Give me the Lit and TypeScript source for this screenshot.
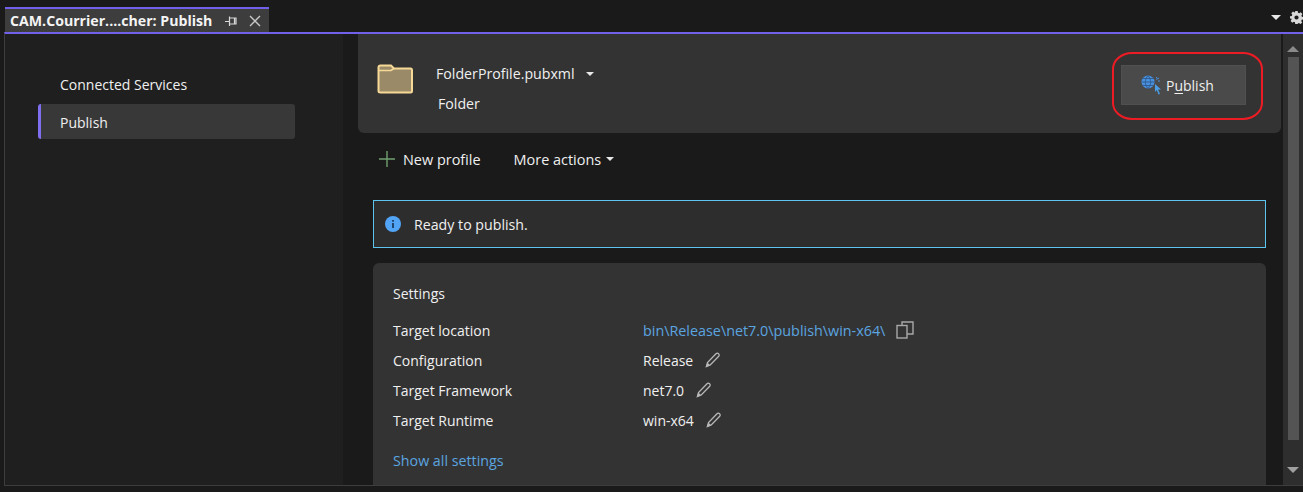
import { LitElement, html, css, svg } from "lit";
import { customElement } from "lit/decorators.js";

const pencil = svg`<svg class="pencil" width="17" height="18" viewBox="0 0 17 18" fill="none"><path d="M2.500 15.500 L3.500 11.500 L12 2.800 C12.800 2 13.800 2 14.600 2.700 C15.400 3.400 15.400 4.400 14.700 5.200 L6.200 14 Z" stroke="#b8b8b8" stroke-width="1.300"/><path d="M1.500 16.500 L3.300 11.500 L6.300 14.200 Z" fill="#b8b8b8"/></svg>`;

@customElement("app-root")
export class AppRoot extends LitElement {
  static styles = css`
    :host { display: block; width: 1303px; height: 492px; background: #1a1a1a; overflow: hidden; position: relative;
      font-family: "Open Sans", "Noto Sans", sans-serif; font-size: 14px; color: #f0f0f0; }
    .tabbar { height: 32px; display: flex; padding-left: 5px; box-sizing: border-box; }
    .tab { width: 264px; height: 25px; margin-top: 7px; box-sizing: border-box; border-top: 2px solid #7160e8; background: #3d3d3d;
      display: flex; align-items: center; font-weight: 700; font-size: 14.15px; padding-left: 5px; color: #f4f4f4; white-space: nowrap; }
    .tab svg { flex: none; }
    .pin { margin-left: 13px; }
    .close { margin-left: 12px; }
    .tabtools { margin-left: auto; display: flex; align-items: center; gap: 9px; padding-top: 3px; }
    .body { margin-left: 4px; width: 1299px; height: 454px; box-sizing: border-box; border-top: 2px solid #7160e8;
      border-left: 1px solid #3d3d3d; border-bottom: 1px solid #3d3d3d; display: flex; background: #1a1a1a; overflow: hidden; }
    .nav { width: 338px; flex: none; background: #1f1f1f; padding: 33px 0 0 33px; box-sizing: border-box; }
    .nav-item { width: 257px; height: 35px; margin-bottom: 2px; box-sizing: border-box; padding-left: 22px; display: flex; align-items: center; border-radius: 3px; }
    .nav-item.on { background: #383838; border-left: 3px solid #7f6ff0; padding-left: 19px; padding-top: 1px; }
    .main { width: 940px; flex: none; padding-left: 15px; box-sizing: border-box; overflow: hidden; }
    .profile { width: 923px; height: 99px; background: #333333; border-radius: 0 0 6px 6px; display: flex; align-items: center; box-sizing: border-box; padding: 0 35px 0 19px; }
    .folder { margin-top: -10px; }
    .pinfo { margin-left: 23px; margin-top: 10px; display: flex; flex-direction: column; gap: 11px; }
    .pname { display: flex; align-items: center; gap: 11px; font-size: 14.2px; }
    .ptype { margin-left: 2px; font-size: 14.2px; }
    .caret { width: 0; height: 0; border-left: 4px solid transparent; border-right: 4px solid transparent; border-top: 4px solid #e8e8e8; }
    .caret.big { border-left-width: 5px; border-right-width: 5px; border-top-width: 5px; }
    .pubwrap { margin-left: auto; position: relative; }
    .pub { width: 125px; height: 40px; box-sizing: border-box; background: #4a4a4a; border: 1px solid #505050; display: flex; align-items: center; padding-left: 19px; gap: 4px; margin-top: 3px; }
    .pub u { text-underline-offset: 2px; }
    .oval { position: absolute; left: -9px; top: -10px; width: 151px; height: 68px; box-sizing: border-box; border: 2px solid #ed1c24; border-radius: 20px / 17px; }
    .actions { display: flex; align-items: center; height: 54px; padding: 0 0 2px 21px; box-sizing: border-box; font-size: 14.45px; }
    .act { display: flex; align-items: center; }
    .act.new { gap: 8px; margin-right: 33px; }
    .act.more { gap: 5px; }
    .banner { margin-left: 15px; width: 893px; height: 48px; box-sizing: border-box; background: #2d2d2d; border: 1px solid #5cc4ee; display: flex; align-items: center; padding-left: 11px; gap: 13px; margin-top: 13px; font-size: 14.2px; }
    .card { margin: 15px 0 0 15px; width: 893px; height: 240px; background: #333333; border-radius: 6px; box-sizing: border-box; padding: 21px 20px; }
    .title { height: 19px; line-height: 19px; margin-bottom: 12px; }
    .grid { display: grid; grid-template-columns: 250px 1fr; grid-auto-rows: 30px; align-items: center; height: 120px; }
    .val { display: flex; align-items: center; gap: 11px; }
    .link { color: #5ba5e0; }
    .path { font-size: 14.35px; }
    .show { margin-top: 16px; height: 20px; line-height: 20px; font-size: 14.25px; }
    .scroll { width: 20px; flex: none; background: #2e2e2e; display: flex; flex-direction: column; align-items: center; }
    .up { width: 0; height: 0; border-left: 6px solid transparent; border-right: 6px solid transparent; border-bottom: 6px solid #8a8a8a; margin-top: 12px; }
    .thumb { width: 11px; height: 383px; background: #545454; margin-top: 5px; }
    .down { width: 0; height: 0; border-left: 6px solid transparent; border-right: 6px solid transparent; border-top: 6px solid #a0a0a0; margin-top: 27px; }
  `;

  render() {
    return html`
      <div class="tabbar">
        <div class="tab">
          <span>CAM.Courrier....cher: Publish</span>
          <svg class="pin" width="12" height="12" viewBox="0 0 12 12" fill="none" stroke="#d8d8d8" stroke-width="1.200"><path d="M0 6.500H4M4.500 1.500V11M4.500 3H11V9H4.500M9.500 3V9" /></svg>
          <svg class="close" width="12" height="12" viewBox="0 0 12 12" fill="none" stroke="#c8c8c8" stroke-width="1.400"><path d="M1 1L11 11M11 1L1 11"/></svg>
        </div>
        <div class="tabtools">
          <span class="caret big"></span>
          <svg width="13" height="13" viewBox="0 0 13 13"><path fill="#d8d8d8" fill-rule="evenodd" d="M5.300 0h2.400l.3 1.800 1.200.5 1.500-1 1.700 1.700-1 1.500.5 1.200 1.600.3v2.400l-1.800.3-.5 1.200 1 1.500-1.700 1.700-1.500-1-1.200.5-.3 1.600H5.300L5 11.200l-1.200-.5-1.500 1-1.700-1.700 1-1.500-.5-1.200L0 7.700V5.300L1.800 5l.5-1.200-1-1.500L3 .6l1.500 1L5 1.200zM6.500 4.400a2.100 2.100 0 1 0 0 4.200 2.100 2.100 0 0 0 0-4.200z"/></svg>
        </div>
      </div>
      <div class="body">
        <div class="nav">
          <div class="nav-item">Connected Services</div>
          <div class="nav-item on">Publish</div>
        </div>
        <div class="main">
          <div class="profile">
            <svg class="folder" width="36" height="30" viewBox="0 0 36 30"><path d="M1.500 3.500C1.500 2.500 2.500 1.500 3.500 1.500H14L17 4.500H33.500C34.500 4.500 35 5.500 35 6.500V27C35 28 34.500 28.500 33.500 28.500H3.500C2.500 28.500 1.500 28 1.500 27Z" fill="#9a8a68" stroke="#f6d997" stroke-width="2"/><path d="M2 6.500H14L17 4.500" fill="none" stroke="#f6d997" stroke-width="1.600"/></svg>
            <div class="pinfo">
              <div class="pname">FolderProfile.pubxml <span class="caret"></span></div>
              <div class="ptype">Folder</div>
            </div>
            <div class="pubwrap">
              <div class="pub">
                <svg width="21" height="20" viewBox="0 0 21 20" fill="none"><circle cx="7" cy="7" r="6.500" fill="#4a90dc"/><path d="M.5 7H13.500M7 .5C3.500 4.500 3.500 9.500 7 13.500M7 .5C10.500 4.500 10.500 9.500 7 13.500M1.500 3.500H12.500M1.500 10.500H12.500" stroke="#2f5f95" stroke-width="1"/><path d="M14 9L20 14.500H17L19 19L17.500 19.500L15.800 15L14 17Z" fill="#4a9fe8"/><path d="M15 2L16 3M17 6H19M15 4.500L18 3" stroke="#4a90dc" stroke-width="1"/></svg>
                <span>P<u>u</u>blish</span>
              </div>
              <div class="oval"></div>
            </div>
          </div>
          <div class="actions">
            <div class="act new">
              <svg width="16" height="16" viewBox="0 0 16 16" stroke="#6fa06f" stroke-width="1.400"><path d="M8 0V16M0 8H16"/></svg>
              <span>New profile</span>
            </div>
            <div class="act more">More actions <span class="caret"></span></div>
          </div>
          <div class="banner">
            <svg width="16" height="16" viewBox="0 0 16 16"><circle cx="8" cy="8" r="8" fill="#52a4f7"/><rect x="7.200" y="7" width="1.600" height="5" fill="#14304f"/><rect x="7.200" y="4" width="1.600" height="1.700" fill="#14304f"/></svg>
            <span>Ready to publish.</span>
          </div>
          <div class="card">
            <div class="title">Settings</div>
            <div class="grid">
              <div>Target location</div>
              <div class="val"><span class="link path">bin\\Release\\net7.0\\publish\\win-x64\\</span>
                <svg width="18" height="18" viewBox="0 0 18 18" fill="none" stroke="#a8a8a8" stroke-width="1.400"><rect x="1" y="4.500" width="10" height="12.500"/><path d="M6 4.500V1H17V13H11"/></svg></div>
              <div>Configuration</div>
              <div class="val">Release ${pencil}</div>
              <div>Target Framework</div>
              <div class="val">net7.0 ${pencil}</div>
              <div>Target Runtime</div>
              <div class="val">win-x64 ${pencil}</div>
            </div>
            <div class="show link">Show all settings</div>
          </div>
        </div>
        <div class="scroll">
          <div class="up"></div>
          <div class="thumb"></div>
          <div class="down"></div>
        </div>
      </div>
    `;
  }
}
